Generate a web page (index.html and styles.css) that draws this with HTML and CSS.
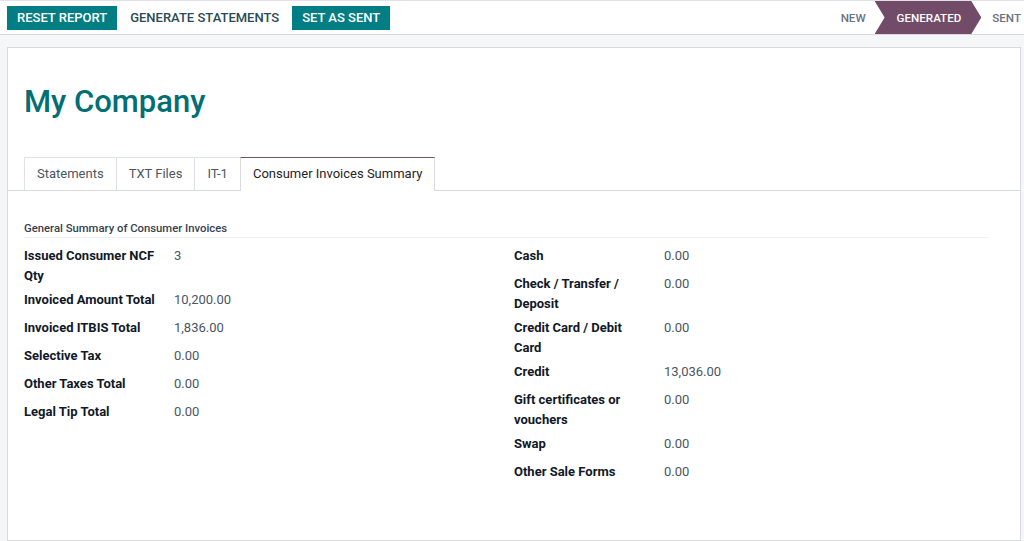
FILE: index.html
```html
<!DOCTYPE html>
<html>
<head>
<meta charset="utf-8">
<link rel="stylesheet" href="styles.css">
</head>
<body>
<div class="control-panel">
  <div class="actions">
    <button class="btn btn-primary">Reset Report</button>
    <button class="btn btn-secondary">Generate Statements</button>
    <button class="btn btn-primary">Set as Sent</button>
  </div>
  <div class="statusbar">
    <span class="status status-first">New</span>
    <span class="status status-current">Generated</span>
    <span class="status status-last">Sent</span>
  </div>
</div>
<div class="content">
  <div class="sheet">
    <h1 class="title">My Company</h1>
    <ul class="tabs">
      <li class="tab">Statements</li>
      <li class="tab">TXT Files</li>
      <li class="tab">IT-1</li>
      <li class="tab tab-active">Consumer Invoices Summary</li>
    </ul>
    <div class="pane">
      <div class="separator">General Summary of Consumer Invoices</div>
      <div class="groups">
        <div class="group">
          <div class="label">Issued Consumer NCF Qty</div><div class="value">3</div>
          <div class="label">Invoiced Amount Total</div><div class="value">10,200.00</div>
          <div class="label">Invoiced ITBIS Total</div><div class="value">1,836.00</div>
          <div class="label">Selective Tax</div><div class="value">0.00</div>
          <div class="label">Other Taxes Total</div><div class="value">0.00</div>
          <div class="label">Legal Tip Total</div><div class="value">0.00</div>
        </div>
        <div class="group">
          <div class="label">Cash</div><div class="value">0.00</div>
          <div class="label">Check / Transfer / Deposit</div><div class="value">0.00</div>
          <div class="label">Credit Card / Debit Card</div><div class="value">0.00</div>
          <div class="label">Credit</div><div class="value">13,036.00</div>
          <div class="label">Gift certificates or vouchers</div><div class="value">0.00</div>
          <div class="label">Swap</div><div class="value">0.00</div>
          <div class="label">Other Sale Forms</div><div class="value">0.00</div>
        </div>
      </div>
    </div>
  </div>
</div>
</body>
</html>
```
FILE: styles.css
```css
* { box-sizing: border-box; }
html, body { margin: 0; padding: 0; }
body {
  font-family: Roboto, "Liberation Sans", sans-serif;
  font-size: 13px;
  color: #212529;
  background: #f5f6f8;
  height: 541px;
  overflow: hidden;
}
.control-panel {
  height: 35px;
  background: #fff;
  border-top: 1px solid #dee2e6;
  border-bottom: 1px solid #d8dadd;
  display: flex;
  justify-content: space-between;
  align-items: stretch;
}
.actions {
  display: flex;
  align-items: center;
  gap: 1px;
  padding-left: 7px;
}
.btn {
  font-family: inherit;
  font-size: 13px;
  font-weight: 500;
  text-transform: uppercase;
  height: 24px;
  padding: 0 10px;
  margin: 0;
  border: none;
  border-radius: 0;
  cursor: pointer;
  line-height: 24px;
}
.btn-primary { background: #017e84; color: #fff; }
.btn-secondary { background: #fff; color: #2a4a55; padding: 0 12px; }
.statusbar {
  display: flex;
  align-items: stretch;
}
.status {
  display: flex;
  align-items: center;
  font-size: 11.6px;
  font-weight: 500;
  text-transform: uppercase;
  color: #6b7280;
  white-space: nowrap;
}
.status-first { padding: 0 9px 0 0; }
.status-current {
  background: #714b67;
  color: #fff;
  padding: 0 20px 0 22px;
  clip-path: polygon(0 0, calc(100% - 10px) 0, 100% 50%, calc(100% - 10px) 100%, 0 100%, 10px 50%);
}
.status-last { padding: 0 3px 0 11px; }
.content {
  padding: 12px 3px 0 7px;
}
.sheet {
  background: #fff;
  border: 1px solid #d8dadd;
  height: 494px;
  padding-top: 35px;
}
.title {
  margin: 0 0 0 16px;
  font-size: 31px;
  font-weight: 500;
  line-height: 1.2;
  color: #016f74;
}
.tabs {
  list-style: none;
  margin: 37px 0 0 0;
  padding: 0 0 0 16px;
  display: flex;
  border-bottom: 1px solid #d8dadd;
}
.tab {
  height: 33px;
  line-height: 31px;
  padding: 0 12px;
  border: 1px solid #dee2e6;
  border-right: none;
  border-bottom: none;
  color: #4b5563;
  background: #fff;
}
.tab-active {
  border: 1px solid #d8dadd;
  border-top-color: #6c5566;
  border-bottom: none;
  margin-bottom: -1px;
  height: 34px;
  color: #1f2328;
}
.pane {
  padding: 29px 32px 0 16px;
}
.separator {
  font-size: 11.3px;
  font-weight: 500;
  color: #374151;
  line-height: 17px;
  border-bottom: 1px solid #eef0f2;
}
.groups {
  display: grid;
  grid-template-columns: 490px 1fr;
  margin-top: 8px;
}
.group {
  display: grid;
  grid-template-columns: 150px 1fr;
  align-content: start;
}
.label {
  font-weight: 700;
  color: #111827;
  line-height: 20px;
  padding: 0 14px 4px 0;
}
.value {
  color: #4b5563;
  line-height: 20px;
  padding-bottom: 8px;
}
```
